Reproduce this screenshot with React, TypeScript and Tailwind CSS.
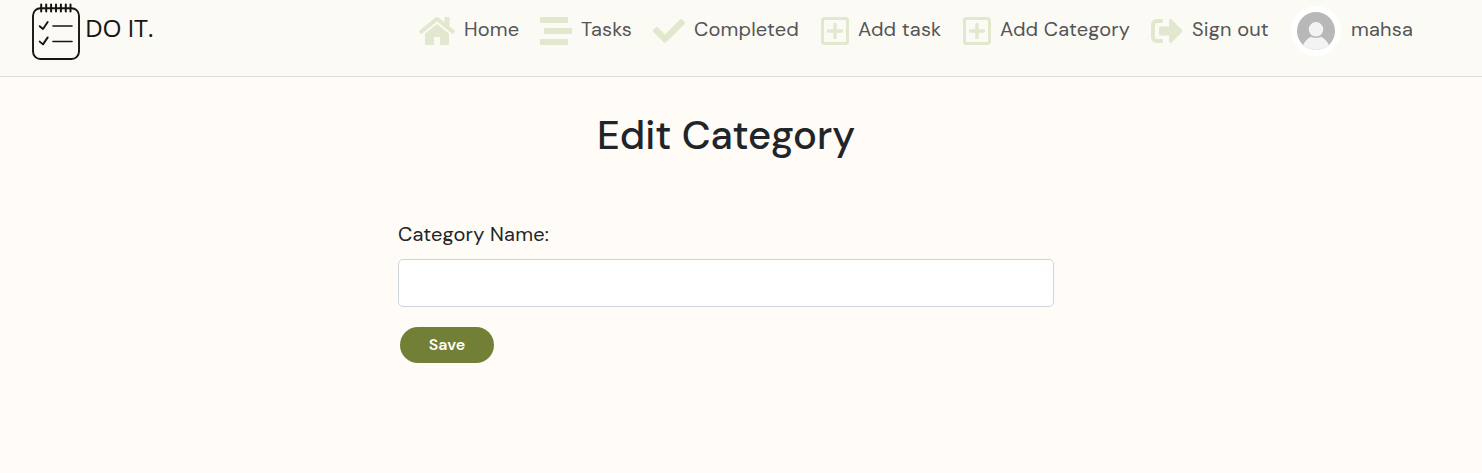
import type { ReactNode } from 'react';
import { FaCheck, FaHome, FaRegPlusSquare, FaSignOutAlt, FaStream } from 'react-icons/fa';

function NotepadLogo() {
  return (
    <svg className="h-[60px] w-[50px] shrink-0" viewBox="0 0 50 60" fill="none" stroke="#141414" strokeLinecap="round" strokeLinejoin="round">
      <rect x="2" y="8.2" width="46" height="50.8" rx="7.5" strokeWidth="1.9" />
      <path d="M10.2 4.4v7.2M15.2 4.4v7.2M20.1 4.4v7.2M25 4.4v7.2M29.9 4.4v7.2M34.8 4.4v7.2M39.5 4.4v7.2" strokeWidth="2" />
      <path d="M8.7 26.2l3.3 2.8 4.7-7M8.7 41.6l3.3 2.8 4.7-7" strokeWidth="1.9" />
      <path d="M22 26h19M22 41.5h19" strokeWidth="1.6" />
    </svg>
  );
}

function Avatar() {
  return (
    <svg className="size-[50px]" viewBox="0 0 50 50">
      <defs>
        <clipPath id="face">
          <circle cx="25" cy="25" r="19" />
        </clipPath>
      </defs>
      <circle cx="25" cy="25" r="25" fill="#fff" />
      <g clipPath="url(#face)">
        <rect width="50" height="50" fill="#b8b8b8" />
        <ellipse cx="25" cy="45" rx="14" ry="15" fill="#f3f3f3" />
        <circle cx="25" cy="23.3" r="8" fill="#f3f3f3" stroke="#b8b8b8" strokeWidth="1.5" />
      </g>
    </svg>
  );
}

function NavItem({ icon, width, children }: { icon: ReactNode; width: string; children: ReactNode }) {
  return (
    <a href="#" className={`flex shrink-0 items-center gap-[9px] ${width}`}>
      <span className="shrink-0 text-[#e2e8ce]">{icon}</span>
      <span className="-mt-[5px] whitespace-nowrap">{children}</span>
    </a>
  );
}

export default function App() {
  return (
    <div className="min-h-screen bg-[#fffbf6] font-['DM_Sans',sans-serif] text-[#212529]">
      <header className="flex h-[77px] items-start border-b border-[#dadcdd] bg-[#fbfaf5]">
        <a href="#" className="ml-[31px] flex h-[60px] w-[388px] items-center">
          <NotepadLogo />
          <span className="-mt-[3px] ml-1 font-['Open_Sans',sans-serif] text-[24.5px] tracking-[-0.2px] text-[#161616]">DO IT.</span>
        </a>
        <nav className="flex h-[62px] items-center text-xl tracking-[0.17px] text-[#555]">
          <NavItem width="w-[121px]" icon={<FaHome className="h-8 w-9" />}>Home</NavItem>
          <NavItem width="w-[113px]" icon={<FaStream className="size-8" />}>Tasks</NavItem>
          <NavItem width="w-[168px]" icon={<FaCheck className="size-8" />}>Completed</NavItem>
          <NavItem width="w-[142px]" icon={<FaRegPlusSquare className="h-8 w-7" />}>Add task</NavItem>
          <NavItem width="w-[188px]" icon={<FaRegPlusSquare className="h-8 w-7" />}>Add Category</NavItem>
          <NavItem width="w-[140px]" icon={<FaSignOutAlt className="size-8" />}>Sign out</NavItem>
          <a href="#" className="flex items-center gap-[10px]">
            <Avatar />
            <span className="-mt-[5px]">mahsa</span>
          </a>
        </nav>
      </header>
      <main className="ml-[398px] w-[656px] pt-[34px]">
        <h1 className="text-center text-[40px] leading-12 font-medium">Edit Category</h1>
        <form className="mt-[60px] flex flex-col items-start" onSubmit={(e) => e.preventDefault()}>
          <label htmlFor="name" className="text-xl leading-[30px] tracking-[0.2px]">Category Name:</label>
          <input id="name" type="text" className="mt-[10px] h-12 w-full rounded-[5px] border border-[#ced4da] bg-white px-4 text-xl outline-none" />
          <button type="submit" className="mt-5 ml-[2px] h-9 w-[94px] rounded-full bg-[#728037] text-base font-semibold text-[#fffbf5]">Save</button>
        </form>
      </main>
    </div>
  );
}
